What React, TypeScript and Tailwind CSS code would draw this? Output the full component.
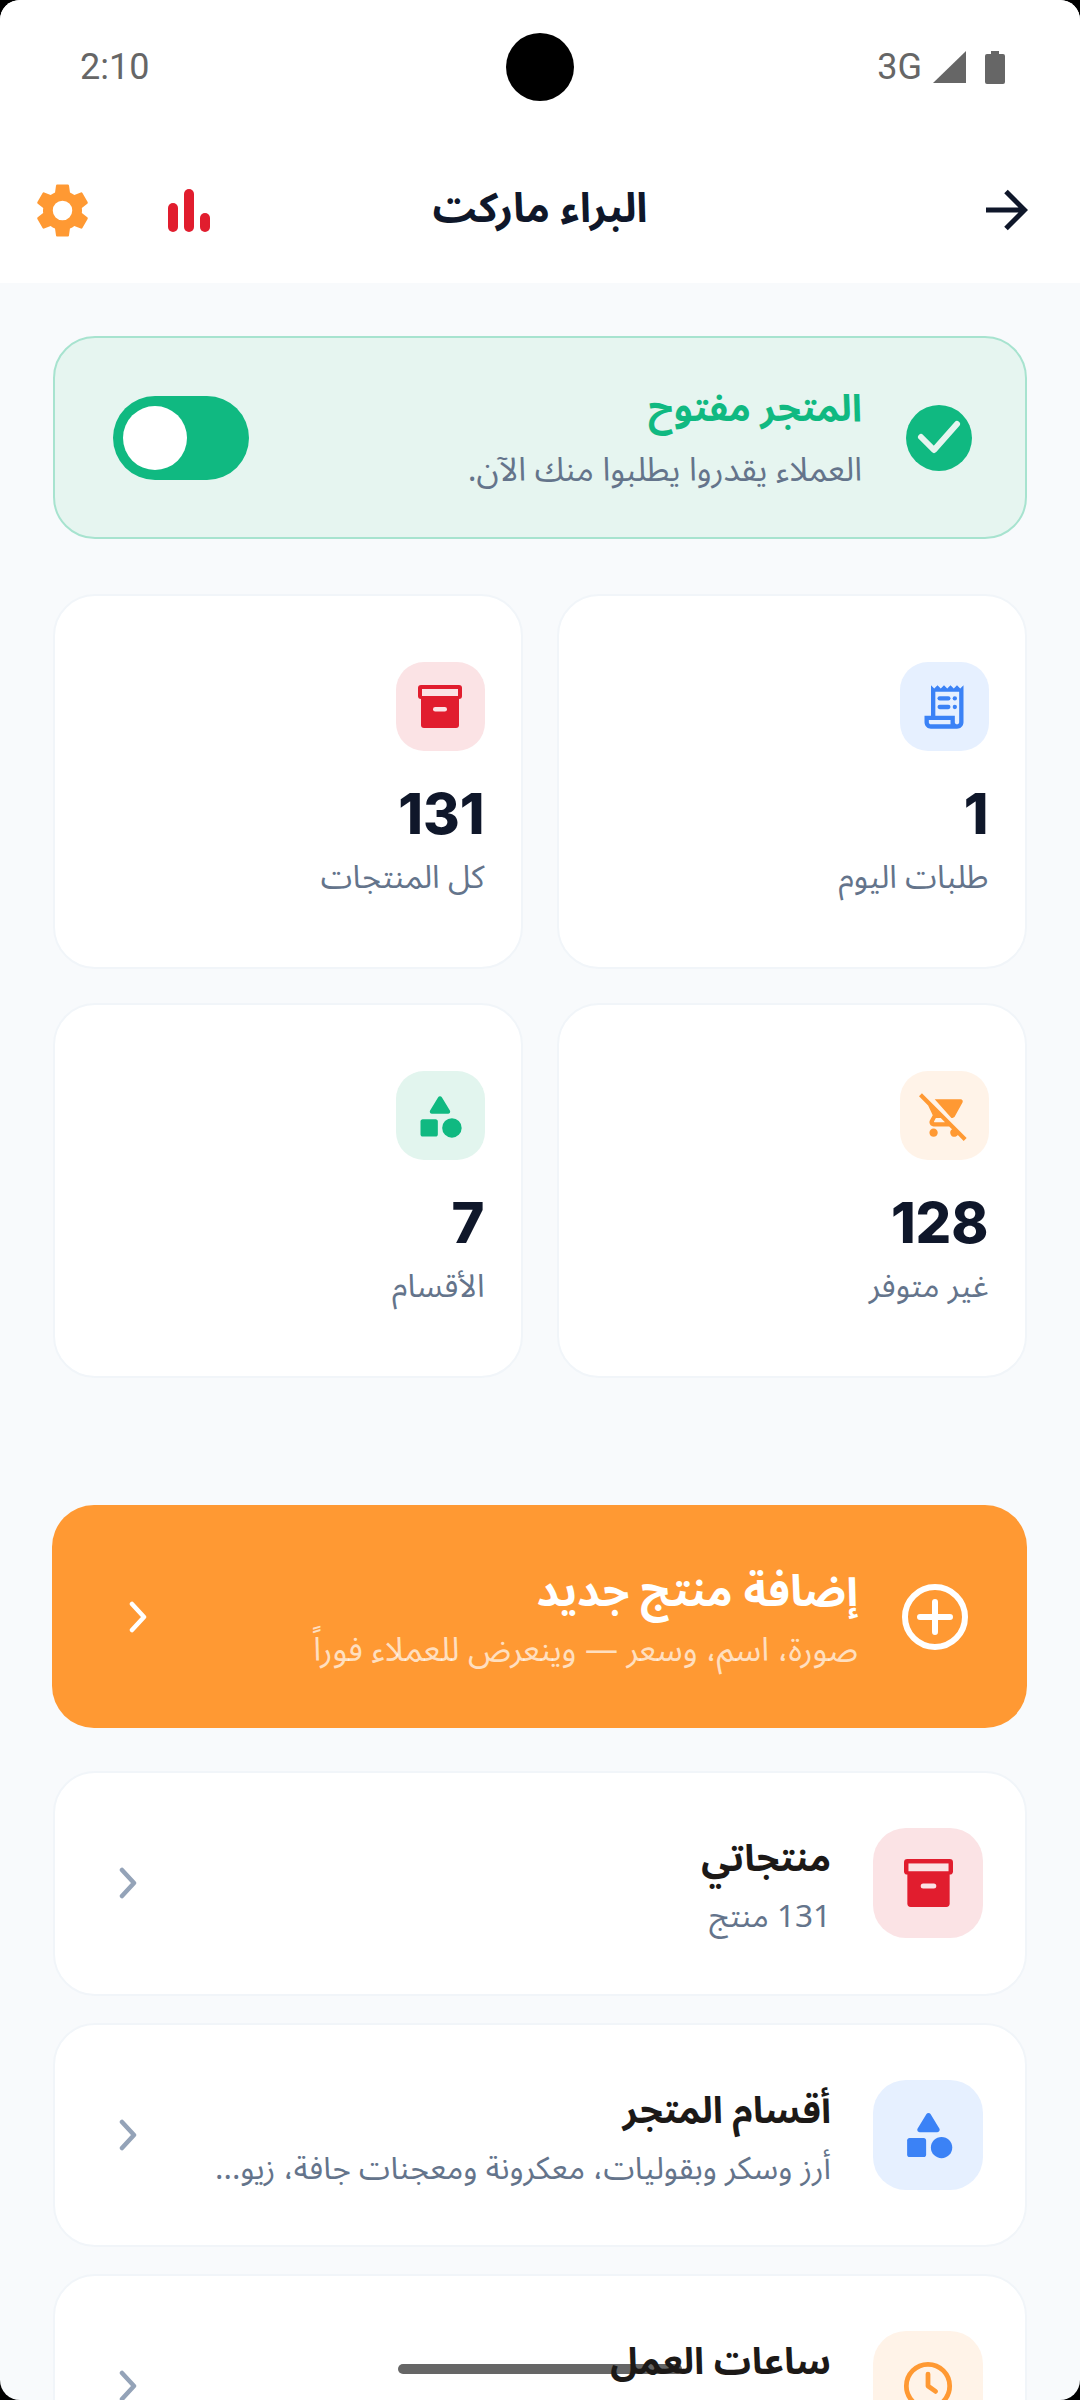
const FONT = "font-['Noto_Sans_Arabic','DejaVu_Sans',sans-serif]";

function ArrowRight() {
  return (
    <svg width="42" height="42" viewBox="0 0 42 42" fill="none" stroke="#0f172a" strokeWidth="5">
      <path d="M0 21h38M20 2.500 38.500 21 20 39.500" />
    </svg>
  );
}

function GearIcon() {
  return (
    <svg width="65" height="65" viewBox="0 0 24 24" fill="#ff9933">
      <path d="M19.14 12.94c.04-.3.06-.61.06-.94 0-.32-.02-.64-.07-.94l2.03-1.58a.49.49 0 0 0 .12-.61l-1.92-3.32a.488.488 0 0 0-.59-.22l-2.39.96c-.5-.38-1.03-.7-1.62-.94l-.36-2.54a.484.484 0 0 0-.48-.41h-3.84c-.24 0-.43.17-.47.41l-.36 2.54c-.59.24-1.13.57-1.62.94l-2.39-.96c-.22-.08-.47 0-.59.22L2.74 8.87c-.12.21-.08.47.12.61l2.03 1.58c-.05.3-.09.63-.09.94s.02.64.07.94l-2.03 1.58a.49.49 0 0 0-.12.61l1.92 3.32c.12.22.37.29.59.22l2.39-.96c.5.38 1.03.7 1.62.94l.36 2.54c.05.24.24.41.48.41h3.84c.24 0 .44-.17.47-.41l.36-2.54c.59-.24 1.13-.56 1.62-.94l2.39.96c.22.08.47 0 .59-.22l1.92-3.32c.12-.22.07-.47-.12-.61l-2.01-1.58zM12 15.6A3.6 3.6 0 1 1 12 8.4a3.6 3.6 0 0 1 0 7.2z" />
    </svg>
  );
}

function BarsIcon() {
  return (
    <svg width="42" height="43" viewBox="0 0 42 43" fill="#e11d2e">
      <rect x="0" y="14" width="10" height="29" rx="5" />
      <rect x="16" y="0" width="10" height="43" rx="5" />
      <rect x="32" y="24" width="10" height="19" rx="5" />
    </svg>
  );
}

function BoxIcon({ width = 44, tint }: { width?: number; tint: string }) {
  return (
    <svg width={width} height={(width * 43) / 44} viewBox="0 0 44 43">
      <rect x="0" y="0" width="44" height="14" rx="3" fill="#e11d2e" />
      <rect x="3" y="10" width="38" height="33" rx="3" fill="#e11d2e" />
      <rect x="4" y="4" width="36" height="7" fill={tint} />
      <rect x="15" y="22" width="14" height="4.500" rx="2.250" fill={tint} />
    </svg>
  );
}

function ReceiptIcon() {
  return (
    <svg width="52" height="52" viewBox="0 0 24 24" fill="#3b82f6">
      <path d="M19.5 3.500 18 2l-1.500 1.500L15 2l-1.500 1.500L12 2l-1.500 1.500L9 2 7.500 3.500 6 2v14H3v3c0 1.660 1.340 3 3 3h12c1.660 0 3-1.340 3-3V2zM15 20H6c-.550 0-1-.450-1-1v-1h10zm4-1c0 .550-.450 1-1 1s-1-.450-1-1v-3H8V5h11z" />
      <rect x="9" y="7" width="6" height="2" rx="1" />
      <rect x="16" y="7" width="2" height="2" rx="1" />
      <rect x="9" y="11" width="6" height="2" rx="1" />
      <rect x="16" y="11" width="2" height="2" rx="1" />
    </svg>
  );
}

function CartOffIcon() {
  return (
    <svg width="50" height="50" viewBox="0 0 24 24" fill="#ff9933">
      <path d="M1.410 1.130 0 2.540l4.390 4.390 2.210 4.660-1.350 2.450c-.160.280-.250.610-.250.960 0 1.100.900 2 2 2h7.460l1.380 1.380A1.997 1.997 0 0 0 17 22c.670 0 1.260-.330 1.620-.840L21.460 24l1.410-1.410zM7.420 15c-.140 0-.250-.110-.250-.250l.030-.120.900-1.630h2.360l2 2zm8.130-2c.750 0 1.410-.410 1.750-1.030l3.580-6.490A.996.996 0 0 0 20 4H7.540zM7 18c-1.100 0-1.990.900-1.990 2S5.900 22 7 22s2-.900 2-2-.900-2-2-2z" />
    </svg>
  );
}

function ShapesIcon({ color, size = 52 }: { color: string; size?: number }) {
  return (
    <svg width={size} height={size} viewBox="0 0 24 24" fill={color}>
      <path d="M11.150 3.400 7.430 9.480c-.410.660.070 1.520.850 1.520h7.430c.780 0 1.260-.860.850-1.520L12.850 3.400a.993.993 0 0 0-1.700 0z" />
      <circle cx="17.500" cy="17.500" r="4.500" />
      <path d="M4 21.500h6c.550 0 1-.450 1-1v-6c0-.550-.450-1-1-1H4c-.550 0-1 .450-1 1v6c0 .550.450 1 1 1z" />
    </svg>
  );
}

function ClockIcon() {
  return (
    <svg width="52" height="52" viewBox="0 0 24 24" fill="none" stroke="#ff9933" strokeWidth="2.200" strokeLinecap="round" strokeLinejoin="round">
      <circle cx="12" cy="12" r="10" />
      <path d="M12 6.500V12l3.500 2.500" />
    </svg>
  );
}

function Chevron({ color }: { color: string }) {
  return (
    <svg width="18" height="32" viewBox="0 0 18 32" fill="none" stroke={color} strokeWidth="4.500" strokeLinecap="round" strokeLinejoin="round" className="shrink-0">
      <path d="M3 3l12 13L3 29" />
    </svg>
  );
}

function StatCard({ icon, tint, value, label }: { icon: React.ReactNode; tint: string; value: string; label: string }) {
  return (
    <div className="flex h-[375px] flex-col items-start rounded-[42px] border-2 border-[#f1f5f9] bg-white px-[36.500px] pt-[66px]">
      <div className={`flex h-[89px] w-[89px] items-center justify-center rounded-[28px] ${tint}`}>{icon}</div>
      <div className="mt-[29px] font-['Inter',sans-serif] text-[56px] leading-[68px] font-extrabold text-[#0f172a]" dir="ltr">{value}</div>
      <div className="mt-[6px] text-[32px] leading-[48px] text-[#64748b]">{label}</div>
    </div>
  );
}

function MenuRow({ icon, tint, title, sub }: { icon: React.ReactNode; tint: string; title: string; sub: string }) {
  return (
    <div className="flex h-[224.500px] shrink-0 items-center gap-[42px] rounded-[42px] border-2 border-[#f1f5f9] bg-white pr-[42px] pl-[64px]">
      <div className={`flex h-[110px] w-[110px] shrink-0 items-center justify-center rounded-[33px] ${tint}`}>{icon}</div>
      <div className="min-w-0 flex-1 pt-[5px]">
        <div className="relative z-10 text-[37px] leading-[56px] font-bold text-[#1c1917]">{title}</div>
        <div className="mt-[7px] text-[31.500px] leading-[46px] whitespace-nowrap text-[#64748b]">{sub}</div>
      </div>
      <Chevron color="#94a3b8" />
    </div>
  );
}

export default function App() {
  return (
    <div className="relative h-[2400px] w-[1080px] overflow-hidden bg-black">
      <div dir="rtl" className={`relative h-full w-full overflow-hidden rounded-[20px] bg-[#f8fafc] ${FONT}`}>
        {/* status bar */}
        <div dir="ltr" className="grid h-[134px] grid-cols-[1fr_auto_1fr] items-center bg-white px-[75px] font-['Roboto',sans-serif] text-[36px] text-[#666666]">
          <span className="pl-[5px]">2:10</span>
          <div className="h-[68px] w-[68px] rounded-full bg-black" />
          <div className="flex items-center justify-end">
            <span>3G</span>
            <svg width="33" height="32" viewBox="0 0 33 32" fill="#666666" className="ml-[11px]"><path d="M33 0v32H0z" /></svg>
            <svg width="20" height="33" viewBox="0 0 20 33" fill="#666666" className="ml-[19px]"><path d="M6 0h8v3h4a2 2 0 0 1 2 2v26a2 2 0 0 1-2 2H2a2 2 0 0 1-2-2V5a2 2 0 0 1 2-2h4z" /></svg>
          </div>
        </div>

        {/* header */}
        <div className="grid h-[149px] grid-cols-[1fr_auto_1fr] items-center bg-white px-[30px]">
          <div className="justify-self-start pt-[3px] pr-[22px]"><ArrowRight /></div>
          <div className="pt-[3px] text-[41px] font-bold text-[#0f172a]">البراء ماركت</div>
          <div className="flex items-center gap-[73px] justify-self-end pt-[3px]">
            <BarsIcon />
            <GearIcon />
          </div>
        </div>

        <div className="flex flex-col px-[53px] pt-[53px]">
          {/* store open banner */}
          <div className="flex h-[203px] items-center gap-[44px] rounded-[42px] border-2 border-[#a7e3cf] bg-[#e6f5f0] pr-[53px] pl-[58px]">
            <div className="h-[66px] w-[66px] shrink-0 rounded-full bg-[#10b981]">
              <svg width="66" height="66" viewBox="0 0 66 66" fill="none" stroke="#e6f5f0" strokeWidth="6" strokeLinecap="round" strokeLinejoin="round"><path d="M15 32l13 13L51 19" /></svg>
            </div>
            <div className="min-w-0 flex-1 pt-[1px]">
              <div className="text-[37.500px] leading-[52px] font-bold text-[#10b981]">المتجر مفتوح</div>
              <div className="mt-[13px] text-[33px] leading-[46px] text-[#64748b]">العملاء يقدروا يطلبوا منك الآن.</div>
            </div>
            <div className="flex h-[84px] w-[136px] shrink-0 items-center justify-end rounded-full bg-[#10b981] pl-[10px]">
              <div className="h-[64px] w-[64px] rounded-full bg-white" />
            </div>
          </div>

          {/* stats */}
          <div className="mt-[55px] grid grid-cols-2 gap-x-[34px] gap-y-[34px]">
            <StatCard icon={<ReceiptIcon />} tint="bg-[#e6f0ff]" value="1" label="طلبات اليوم" />
            <StatCard icon={<BoxIcon tint="#fbe3e5" />} tint="bg-[#fbe3e5]" value="131" label="كل المنتجات" />
            <StatCard icon={<CartOffIcon />} tint="bg-[#fff3e8]" value="128" label="غير متوفر" />
            <StatCard icon={<ShapesIcon color="#10b981" />} tint="bg-[#e2f5ee]" value="7" label="الأقسام" />
          </div>

          {/* add product */}
          <div className="mt-[127px] -ml-px flex h-[223px] shrink-0 items-center gap-[44px] rounded-[42px] bg-[#ff9933] pr-[59px] pl-[77px] text-white">
            <svg width="66" height="66" viewBox="0 0 66 66" fill="none" stroke="white" strokeWidth="6" strokeLinecap="round" className="shrink-0"><circle cx="33" cy="33" r="30" /><path d="M33 18v30M18 33h30" /></svg>
            <div className="min-w-0 flex-1 pt-[2px]">
              <div className="text-[43.500px] leading-[60px] font-bold">إضافة منتج جديد</div>
              <div className="mt-[6px] text-[33px] leading-[46px] text-white/70">صورة، اسم، وسعر — وينعرض للعملاء فوراً</div>
            </div>
            <Chevron color="white" />
          </div>

          {/* menu */}
          <div className="mt-[43px] flex flex-col gap-[27px]">
            <MenuRow icon={<BoxIcon width={49} tint="#fbe3e5" />} tint="bg-[#fbe3e5]" title="منتجاتي" sub="131 منتج" />
            <MenuRow icon={<ShapesIcon color="#3b82f6" size={57} />} tint="bg-[#e6f0ff]" title="أقسام المتجر" sub="أرز وسكر وبقوليات، معكرونة ومعجنات جافة، زيو..." />
            <MenuRow icon={<ClockIcon />} tint="bg-[#fff3e8]" title="ساعات العمل" sub={"\u00a0"} />
          </div>
        </div>

        {/* gesture bar */}
        <div className="absolute bottom-[26px] left-[398px] h-[10px] w-[284px] rounded-full bg-[#666666]" />
      </div>
    </div>
  );
}
